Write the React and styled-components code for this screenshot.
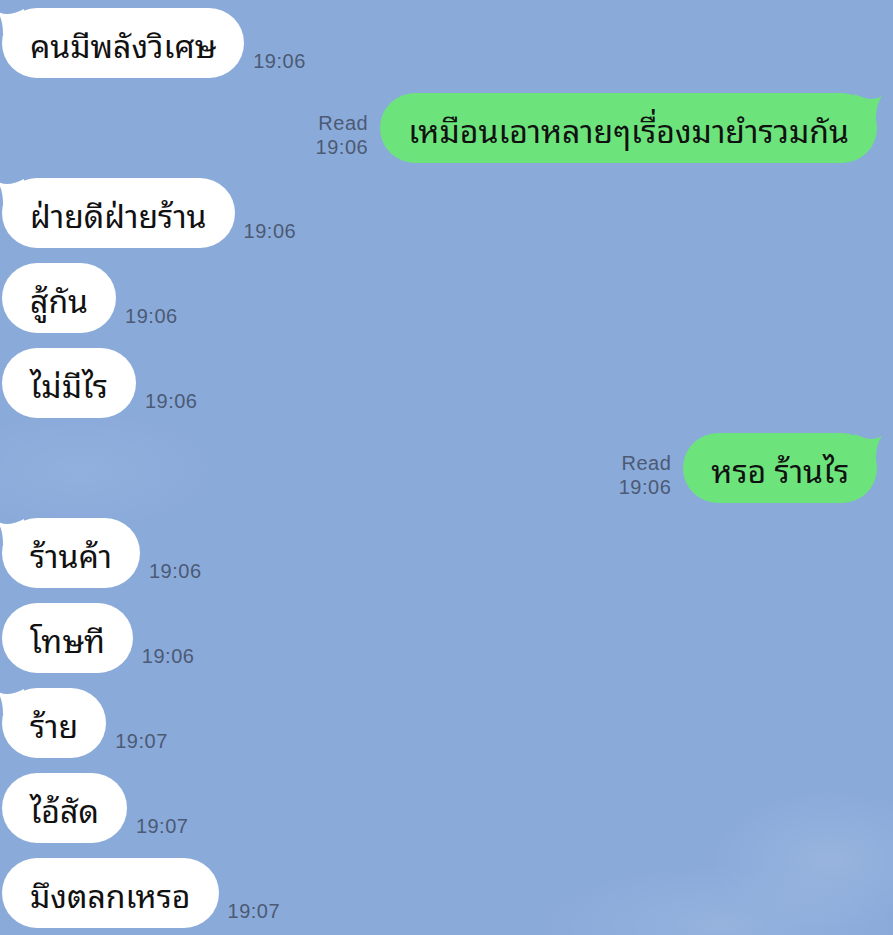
import React from 'react';
import styled, { createGlobalStyle } from 'styled-components';

const GlobalStyle = createGlobalStyle`
  html, body {
    margin: 0;
    padding: 0;
  }
  body {
    background: #8aaada;
  }
`;

const Screen = styled.div`
  width: 893px;
  height: 935px;
  overflow: hidden;
  box-sizing: border-box;
  padding: 8px 16px 0 2px;
  background:
    radial-gradient(ellipse 140px 60px at 80px 470px, rgba(255, 255, 255, 0.07), transparent),
    radial-gradient(ellipse 120px 70px at 830px 860px, rgba(255, 255, 255, 0.12), transparent),
    radial-gradient(ellipse 180px 60px at 720px 925px, rgba(255, 255, 255, 0.1), transparent),
    #8aaada;
`;

const Thread = styled.div`
  display: flex;
  flex-direction: column;
  gap: 15px;
`;

const Row = styled.div`
  display: flex;
  align-items: flex-end;
  justify-content: ${({ mine }) => (mine ? 'flex-end' : 'flex-start')};
`;

const Bubble = styled.div`
  position: relative;
  height: 70px;
  box-sizing: border-box;
  display: flex;
  align-items: center;
  padding: 0 28px;
  border-radius: 35px;
  background: ${({ mine }) => (mine ? '#6ce47b' : '#ffffff')};
  color: #111;
  font-family: 'Noto Sans Thai Looped', 'Noto Serif Thai', 'Loma', 'Garuda', 'Tlwg Typo', 'Norasi', 'Sarabun', 'Noto Sans Thai', 'Noto Sans', sans-serif;
  font-size: 32px;
  white-space: nowrap;
`;

// little speech tail at the top corner of the first bubble in a group
const Tail = styled.svg`
  position: absolute;
  top: 0;
  width: 30px;
  height: 30px;
  ${({ mine }) => (mine ? 'right: -8px;' : 'left: -8px; transform: scaleX(-1);')}
`;

const Meta = styled.div`
  display: flex;
  flex-direction: column;
  align-items: ${({ mine }) => (mine ? 'flex-end' : 'flex-start')};
  margin: ${({ mine }) => (mine ? '0 12px 4px 0' : '0 0 5px 9px')};
  color: #4c5a74;
  font-family: 'Liberation Sans', Arial, sans-serif;
  font-size: 20px;
  line-height: 24px;
  letter-spacing: 0.5px;
`;

const messages = [
  { text: 'คนมีพลังวิเศษ', time: '19:06', tail: true },
  { text: 'เหมือนเอาหลายๆเรื่องมายำรวมกัน', time: '19:06', mine: true, tail: true },
  { text: 'ฝ่ายดีฝ่ายร้าน', time: '19:06', tail: true },
  { text: 'สู้กัน', time: '19:06' },
  { text: 'ไม่มีไร', time: '19:06' },
  { text: 'หรอ ร้านไร', time: '19:06', mine: true, tail: true },
  { text: 'ร้านค้า', time: '19:06', tail: true },
  { text: 'โทษที', time: '19:06' },
  { text: 'ร้าย', time: '19:07', tail: true },
  { text: 'ไอ้สัด', time: '19:07' },
  { text: 'มึงตลกเหรอ', time: '19:07' },
];

const BubbleTail = ({ mine }) => (
  <Tail mine={mine} viewBox="0 0 30 30">
    <path d="M0 1 Q17 10 27 3 Q21 11 21 26 L0 30 Z" fill={mine ? '#6ce47b' : '#ffffff'} />
  </Tail>
);

const Message = ({ text, time, mine, tail }) => (
  <Row mine={mine}>
    {mine && (
      <Meta mine>
        <span>Read</span>
        <span>{time}</span>
      </Meta>
    )}
    <Bubble mine={mine}>
      {tail && <BubbleTail mine={mine} />}
      {text}
    </Bubble>
    {!mine && <Meta>{time}</Meta>}
  </Row>
);

export default function App() {
  return (
    <>
      <GlobalStyle />
      <Screen>
        <Thread>
          {messages.map((m, i) => (
            <Message key={i} {...m} />
          ))}
        </Thread>
      </Screen>
    </>
  );
}
